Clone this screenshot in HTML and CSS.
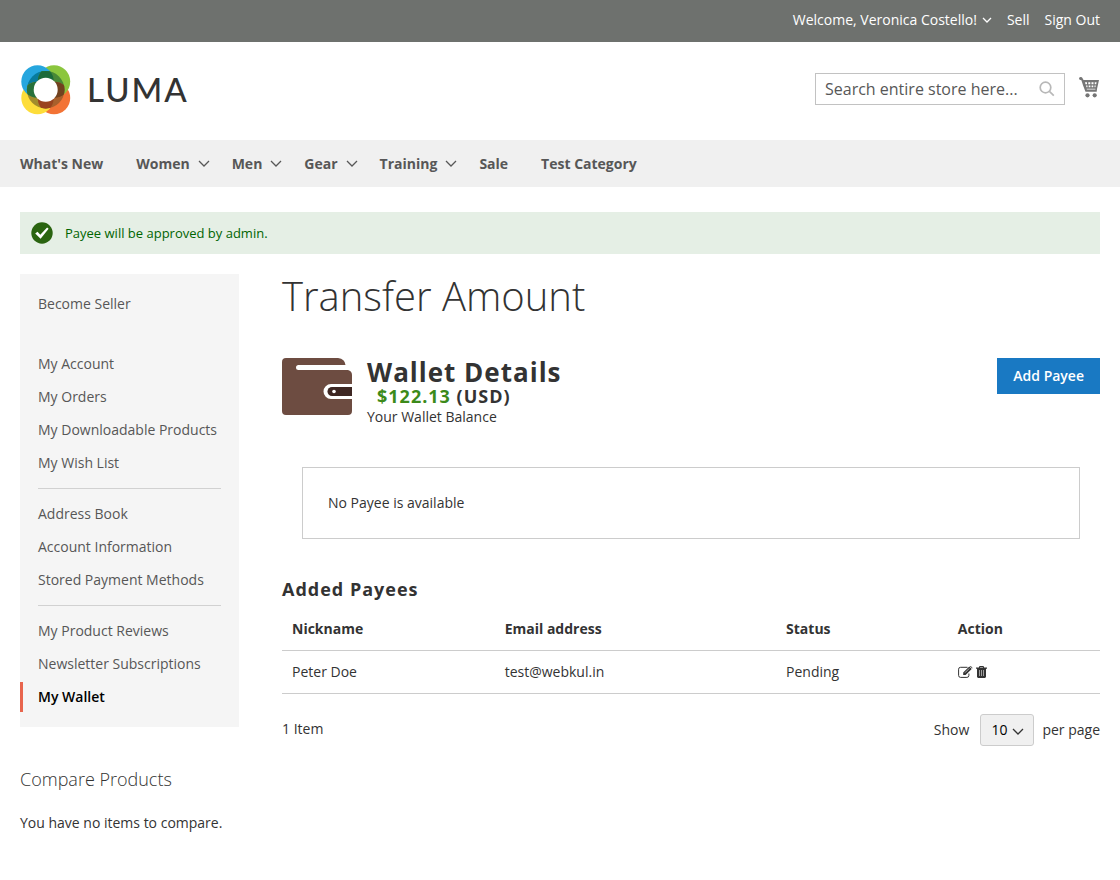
FILE: index.html
```html
<!DOCTYPE html>
<html lang="en">
<head>
    <meta charset="UTF-8">
    <meta name="viewport" content="width=device-width, initial-scale=1">
    <title>Transfer Amount</title>
    <link rel="stylesheet" href="styles.css">
</head>
<body>
<header>
    <div class="panel">
        <button type="button" class="customer">Welcome, Veronica Costello!
            <svg width="10" height="6" viewBox="0 0 10 6"><path d="M1 1l4 4 4-4"/></svg>
        </button>
        <a href="#">Sell</a>
        <a href="#">Sign Out</a>
    </div>
    <div class="header">
        <a href="#" class="logo">
            <svg width="51" height="51" viewBox="-1 -1 51 51">
                <defs>
                    <clipPath id="tl"><circle cx="16.5" cy="16.5" r="16.2"/></clipPath>
                    <clipPath id="tr"><circle cx="33" cy="16.5" r="16.2"/></clipPath>
                    <clipPath id="bl"><circle cx="16.5" cy="33" r="16.2"/></clipPath>
                    <clipPath id="br"><circle cx="33" cy="33" r="16.2"/></clipPath>
                    <clipPath id="ring"><circle cx="24.700" cy="24.700" r="18.8"/></clipPath>
                </defs>
                <circle cx="33" cy="33" r="16.2" fill="#f37335"/>
                <circle cx="16.5" cy="33" r="16.2" fill="#fddd3a"/>
                <circle cx="33" cy="16.5" r="16.2" fill="#8bc63e"/>
                <circle cx="16.5" cy="16.5" r="16.2" fill="#26a6de"/>
                <g clip-path="url(#ring)">
                    <circle cx="16.5" cy="16.5" r="16.2" fill="#087b9c"/>
                    <circle cx="33" cy="16.5" r="16.2" fill="#498837"/>
                    <circle cx="16.5" cy="33" r="16.2" fill="#a18c2c"/>
                    <circle cx="33" cy="33" r="16.2" fill="#a9602c"/>
                    <g clip-path="url(#tl)">
                        <circle cx="33" cy="16.5" r="16.2" fill="#1c6b3a"/>
                        <circle cx="16.5" cy="33" r="16.2" fill="#27713b"/>
                    </g>
                    <g clip-path="url(#br)">
                        <circle cx="33" cy="16.5" r="16.2" fill="#71421f"/>
                        <circle cx="16.5" cy="33" r="16.2" fill="#9a431f"/>
                    </g>
                </g>
                <circle cx="24.700" cy="24.700" r="12" fill="#fff"/>
            </svg>
            <span>LUMA</span>
        </a>
        <form class="search">
            <input type="text" placeholder="Search entire store here..." aria-label="Search">
            <button type="button" aria-label="Search">
                <svg width="16" height="16" viewBox="0 0 16 16"><circle cx="6.5" cy="6.5" r="5.3"/><path d="M10.4 10.4l4.4 4.2"/></svg>
            </button>
        </form>
        <a href="#" class="cart" aria-label="My Cart">
            <svg width="21" height="21" viewBox="0 0 21 21">
                <path d="M1.500 0q1.700 0 2.200 1.400L4.500 3H20l-2 9-.3 2.800H6.500L4.100 8.600 2.400 3.300Q0 3 0 1.500T1.500 0z"/>
                <path class="holes" d="M6 5.200h2v2H6.500zM9.300 5.200h2v2h-2zM12.500 5.200h2v2h-2zM15.700 5.200h1.900l-.4 2h-1.500zM7 8.500h1.500v1.800h-1zM9.700 8.500h1.700v1.800H9.700zM12.600 8.500h1.700v1.800h-1.700zM15.500 8.500h1.300l-.4 1.800h-.9zM7.600 11.700h8.800v.9H7.900z"/>
                <circle cx="8.500" cy="18.300" r="2.100"/><circle cx="15.700" cy="18.300" r="2.100"/>
            </svg>
        </a>
    </div>
</header>
<nav>
    <ul class="menu">
        <li><a href="#">What's New</a></li>
        <li class="parent"><a href="#">Women <svg width="12" height="8" viewBox="0 0 12 8"><path d="M1 1l5 5 5-5"/></svg></a></li>
        <li class="parent"><a href="#">Men <svg width="12" height="8" viewBox="0 0 12 8"><path d="M1 1l5 5 5-5"/></svg></a></li>
        <li class="parent"><a href="#">Gear <svg width="12" height="8" viewBox="0 0 12 8"><path d="M1 1l5 5 5-5"/></svg></a></li>
        <li class="parent"><a href="#">Training <svg width="12" height="8" viewBox="0 0 12 8"><path d="M1 1l5 5 5-5"/></svg></a></li>
        <li><a href="#">Sale</a></li>
        <li><a href="#">Test Category</a></li>
    </ul>
</nav>
<div class="page">
    <div class="message">
        <svg width="22" height="22" viewBox="0 0 22 22"><circle cx="11" cy="11" r="10.7"/><path d="M4.2 11.4l2.3-1.7 2.8 3 6.8-7.1 1.5 1.1-8 10z"/></svg>
        <span>Payee will be approved by admin.</span>
    </div>
    <div class="columns">
        <aside>
            <div class="account-nav">
                <ul class="seller">
                    <li><a href="#">Become Seller</a></li>
                </ul>
                <ul>
                    <li><a href="#">My Account</a></li>
                    <li><a href="#">My Orders</a></li>
                    <li><a href="#">My Downloadable Products</a></li>
                    <li><a href="#">My Wish List</a></li>
                </ul>
                <ul class="group">
                    <li><a href="#">Address Book</a></li>
                    <li><a href="#">Account Information</a></li>
                    <li><a href="#">Stored Payment Methods</a></li>
                </ul>
                <ul class="group">
                    <li><a href="#">My Product Reviews</a></li>
                    <li><a href="#">Newsletter Subscriptions</a></li>
                    <li class="current"><a href="#">My Wallet</a></li>
                </ul>
            </div>
            <div class="compare">
                <h3>Compare Products</h3>
                <p>You have no items to compare.</p>
            </div>
        </aside>
        <main>
            <h1>Transfer Amount</h1>
            <div class="wallet">
                <svg width="70" height="57" viewBox="0 0 70 57">
                    <path fill="#6d4c41" d="M4 0h52q7 1 7.500 7H16.500a2.500 2.500 0 0 0 0 5h49.500q4 1 4 5v36q0 4-4 4H4q-4 0-4-4V4q0-4 4-4z"/>
                    <path fill="#fff" d="M70 26H49a7.500 7.500 0 0 0 0 15h21z"/>
                    <path fill="#3e2723" d="M70 29H50a4.500 4.500 0 0 0 0 9h20z"/>
                    <circle cx="52" cy="33.500" r="1.800" fill="#fff"/>
                </svg>
                <div class="details">
                    <h2>Wallet Details</h2>
                    <p class="amount"><span>$122.13</span> (USD)</p>
                    <p>Your Wallet Balance</p>
                </div>
                <button type="button" class="add">Add Payee</button>
            </div>
            <div class="empty">No Payee is available</div>
            <h4>Added Payees</h4>
            <table>
                <thead>
                <tr>
                    <th class="nickname">Nickname</th>
                    <th class="email">Email address</th>
                    <th class="status">Status</th>
                    <th>Action</th>
                </tr>
                </thead>
                <tbody>
                <tr>
                    <td>Peter Doe</td>
                    <td>test@webkul.in</td>
                    <td>Pending</td>
                    <td>
                        <div class="actions">
                            <a href="#" aria-label="Edit">
                                <svg width="15" height="12" viewBox="0 0 15 12"><path fill="none" stroke="#333" d="M9.500 1.300H2.600Q.6 1.300.6 3.200v6.200q0 2 2 2h6.300q2 0 2-2V7.500"/><path fill="#333" d="M5.200 9V6.600L11.300.5l2.400 2.400L7.600 9zM11.800.1q.6-.4 1.200.1l1.200 1.200q.5.600 0 1.100z"/><path stroke="#fff" stroke-width=".6" d="M7 6.700l4.300-4.300"/></svg>
                            </a>
                            <a href="#" aria-label="Delete">
                                <svg width="11" height="12" viewBox="0 0 11 12"><path fill="#333" d="M3.500 0h4l.7 1.600H11v1.200h-1V11l-1 1H2l-1-1V2.800H0V1.600h2.800zM4.200.9l-.3.700h3.200l-.3-.7z"/><path stroke="#bbb" stroke-width=".8" d="M3.500 4v6M5.500 4v6M7.500 4v6"/></svg>
                            </a>
                        </div>
                    </td>
                </tr>
                </tbody>
            </table>
            <div class="toolbar">
                <p>1 Item</p>
                <div class="limiter">
                    <label for="limiter">Show</label>
                    <div class="select">
                        <select id="limiter">
                            <option>10</option>
                            <option>20</option>
                            <option>50</option>
                        </select>
                        <svg width="12" height="8" viewBox="0 0 12 8"><path d="M1 1l5 5 5-5"/></svg>
                    </div>
                    <span>per page</span>
                </div>
            </div>
        </main>
    </div>
</div>
</body>
</html>
```
FILE: styles.css
```css
*{
    margin: 0;
    padding: 0;
    box-sizing: border-box;
}
body{
    font-family: "Open Sans", "Noto Sans", sans-serif;
    font-size: 14px;
    line-height: 20px;
    color: #333;
    background: #fff;
}
ul,li{
    list-style: none;
}
a{
    color: inherit;
    text-decoration: none;
}
button,input,select{
    font-family: inherit;
}
svg{
    display: block;
    flex: none;
}
.panel{
    display: flex;
    justify-content: flex-end;
    gap: 15px;
    padding: 10px 20px 12px;
    background: #6e716e;
    color: #fff;
}
.customer{
    display: flex;
    align-items: center;
    gap: 5px;
    border: 0;
    background: none;
    color: #fff;
    font-size: 14px;
    line-height: 20px;
    cursor: pointer;
}
.customer path{
    fill: none;
    stroke: #fff;
    stroke-width: 1.3;
}
.header{
    display: flex;
    align-items: flex-start;
    padding: 22px 20px 25px;
}
.logo{
    display: flex;
    align-items: center;
    gap: 16px;
    margin-right: auto;
    font-family: Lato, sans-serif;
    font-size: 33px;
    font-weight: 500;
    line-height: 51px;
    letter-spacing: 2px;
}
.search{
    position: relative;
    width: 250px;
    margin: 9px 14px 0 0;
}
.search input{
    display: block;
    width: 100%;
    height: 32px;
    padding: 0 35px 0 9px;
    border: 1px solid #c2c2c2;
    font-size: 16px;
    color: #333;
}
.search input::placeholder{
    color: #575757;
}
.search button{
    position: absolute;
    top: 8px;
    right: 10px;
    border: 0;
    background: none;
    cursor: pointer;
}
.search svg{
    fill: none;
    stroke: #b8b8b8;
    stroke-width: 1.7;
}
.cart{
    margin-top: 13px;
    fill: #757575;
}
.cart .holes{
    fill: #fff;
}
nav{
    padding: 0 20px;
    background: #f0f0f0;
}
.menu{
    display: flex;
    font-weight: 700;
    line-height: 47px;
    color: #575757;
}
.menu li{
    margin-right: 33px;
}
.menu .parent{
    margin-right: 22px;
}
.menu a{
    display: flex;
    align-items: center;
    gap: 8px;
}
.menu path{
    fill: none;
    stroke: #575757;
    stroke-width: 1.3;
}
.page{
    padding: 25px 20px 40px;
}
.message{
    display: flex;
    align-items: center;
    gap: 12px;
    padding: 10px 11px;
    margin-bottom: 20px;
    background: #e5efe5;
    color: #006400;
    font-size: 13px;
    line-height: 22px;
}
.message circle{
    fill: #2a6410;
}
.message path{
    fill: #fff;
}
.columns{
    display: grid;
    grid-template-columns: 219px 1fr;
    gap: 43px;
}
.account-nav{
    padding: 15px 0;
    background: #f5f5f5;
    color: #575757;
}
.account-nav li{
    padding: 5px 15px;
    border-left: 3px solid transparent;
}
.account-nav li + li{
    margin-top: 3px;
}
.account-nav .seller{
    margin-bottom: 30px;
}
.account-nav .group::before{
    content: "";
    display: block;
    margin: 10px 18px;
    border-top: 1px solid #d1d1d1;
}
.account-nav .current{
    border-color: #e8654d;
    color: #000;
    font-weight: 600;
}
.compare{
    margin-top: 42px;
}
.compare h3{
    margin-bottom: 24px;
    font-size: 18px;
    font-weight: 300;
}
h1{
    margin-bottom: 40px;
    font-size: 40px;
    font-weight: 300;
    line-height: 44px;
}
.wallet{
    display: flex;
    align-items: flex-start;
}
.details{
    margin: 0 auto 0 15px;
}
.wallet h2{
    font-size: 26px;
    line-height: 28px;
    letter-spacing: 1px;
}
.amount{
    padding-left: 10px;
    font-size: 18px;
    font-weight: 700;
    letter-spacing: 1px;
}
.amount span{
    color: #3c8a1a;
}
.add{
    padding: 8px 16px;
    border: 0;
    background: #1979c3;
    color: #fff;
    font-size: 14px;
    font-weight: 600;
    line-height: 20px;
    cursor: pointer;
}
.empty{
    margin: 40px 20px;
    padding: 25px;
    border: 1px solid #ccc;
}
.details p + p{
    margin-top: 1px;
}
h4{
    margin-bottom: 9px;
    font-size: 18px;
    line-height: 20px;
    letter-spacing: 1px;
}
table{
    width: 100%;
    border-collapse: collapse;
    table-layout: fixed;
}
th,td{
    padding: 11px 10px;
    border-bottom: 1px solid #ccc;
    text-align: left;
}
.nickname{
    width: 26%;
}
.email{
    width: 34.4%;
}
.status{
    width: 21%;
}
.actions{
    display: flex;
    gap: 3px;
}
.toolbar{
    display: flex;
    justify-content: space-between;
    margin-top: 20px;
}
.toolbar p{
    line-height: 30px;
}
.limiter{
    display: flex;
    align-items: center;
}
.select{
    position: relative;
    margin: 0 8px 0 11px;
}
.select select{
    display: block;
    appearance: none;
    width: 54px;
    height: 32px;
    padding: 0 24px 2px 10px;
    border: 1px solid #ccc;
    border-radius: 3px;
    background: #f0f0f0;
    color: #000;
    font-size: 14px;
}
.select svg{
    position: absolute;
    top: 14px;
    right: 10px;
    pointer-events: none;
}
.select path{
    fill: none;
    stroke: #333;
    stroke-width: 1.3;
}
```
